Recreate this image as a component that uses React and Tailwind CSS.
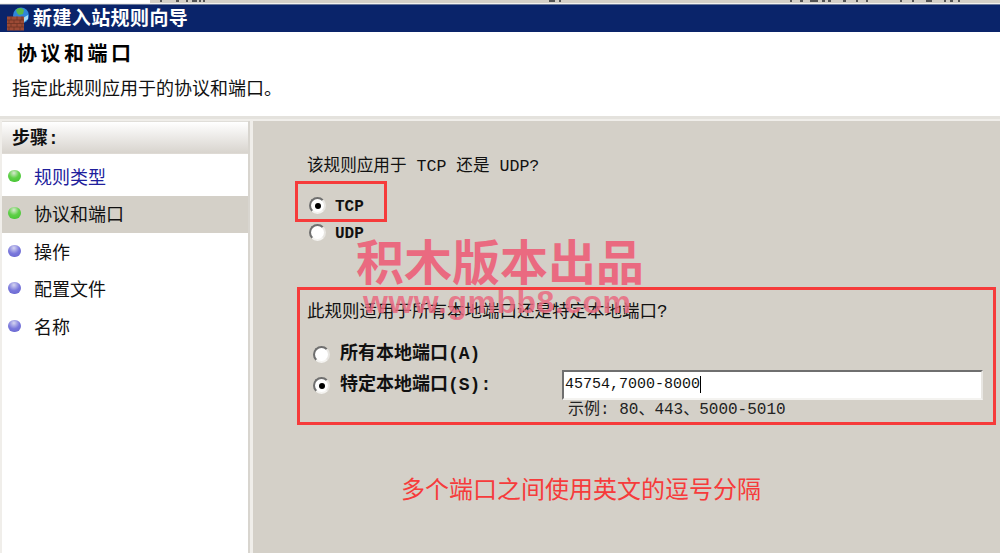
const font = "font-['Liberation_Mono','Noto_Sans_CJK_SC',monospace]";

const steps = [
  { label: '规则类型', done: true, link: true },
  { label: '协议和端口', done: true, active: true },
  { label: '操作' },
  { label: '配置文件' },
  { label: '名称' },
];

function Bullet({ done }) {
  return (
    <span
      className={`w-[13px] h-[12px] -mt-[2px] rounded-full shrink-0 ${
        done
          ? 'bg-[radial-gradient(circle_at_45%_25%,#d8e8d0_0%,#5fd048_45%,#3cc02c_100%)]'
          : 'bg-[radial-gradient(circle_at_45%_25%,#d5d5f0_0%,#7a78dc_50%,#6462cc_100%)]'
      }`}
    />
  );
}

function Radio({ checked }) {
  return (
    <span className="w-[17px] h-[17px] rounded-full bg-white border-2 border-t-[#6f6f6f] border-l-[#6f6f6f] border-r-[#e8e6e2] border-b-[#f4f3f0] flex items-center justify-center shrink-0">
      {checked && <span className="w-[6px] h-[6px] rounded-full bg-black" />}
    </span>
  );
}

function FirewallIcon() {
  return (
    <svg width="24" height="24" viewBox="0 0 24 24" className="shrink-0">
      <circle cx="15" cy="8.5" r="8" fill="#2f86d8" />
      <path d="M10 3c3-3 6-2 8 0l-1 4-4 1-2-2z" fill="#58b848" />
      <path d="M17 11l5-3 0 4-4 3z" fill="#a8dcf4" />
      <rect x="1" y="9.5" width="17" height="14" fill="#9c4a35" />
      <path d="M1 13h17M1 16.5h17M1 20h17M5 9.5v3.5M11 9.5v3.5M16 9.5v3.5M3 13v3.5M8 13v3.5M14 13v3.5M5 16.5v3.5M11 16.5v3.5M16 16.5v3.5M3 20v3.5M8 20v3.5M14 20v3.5" stroke="#6d3324" strokeWidth="0.8" fill="none" />
    </svg>
  );
}

// bottoms of the window behind, cut off by the screenshot's top edge
function TopStrip() {
  return (
    <svg width="1000" height="5" className="block shrink-0">
      <rect x="150" width="850" height="3" fill="#d4d0c8" />
      <rect y="3" width="1000" height="1" fill="#f4f2ee" />
      <rect y="4" width="1000" height="1" fill="#6b7a9c" />
      <path d="M160 0h2v2h-2zM176 0h3v2h-3zM186 0h2v2h-2zM192 0h5v2h-5zM199 0h2v2h-2zM203 0h2v2h-2zM549 0h6v2h-6zM559 0h2v2h-2zM790 0h2v2h-2zM800 0h3v2h-3zM810 0h8v2h-8zM822 0h3v2h-3zM828 0h3v2h-3zM843 0h3v2h-3zM856 0h2v2h-2zM866 0h2v2h-2zM900 0h2v2h-2zM912 0h2v2h-2zM926 0h6v2h-6zM944 0h2v2h-2zM950 0h3v2h-3zM958 0h2v2h-2z" fill="#555" />
    </svg>
  );
}

export default function App() {
  return (
    <div className={`relative w-[1000px] h-[553px] overflow-hidden bg-white text-[#111] flex flex-col ${font}`}>
      <TopStrip />

      <div className="h-[27px] shrink-0 bg-[#0a246a] flex items-center pl-[6px] gap-[3px] text-white">
        <FirewallIcon />
        <span className="text-[19px] font-bold leading-none tracking-[0.4px] pt-[3px]">新建入站规则向导</span>
      </div>

      <div className="h-[84px] shrink-0 bg-white pl-[12px] pt-[11px]">
        <div className="pl-[5px] text-[20px] font-bold leading-[26px] tracking-[3.5px] text-black">协议和端口</div>
        <div className="mt-[9px] text-[18px] leading-[24px]">指定此规则应用于的协议和端口。</div>
      </div>

      <div className="flex-1 flex min-h-0 border-t-[3px] border-[#e4e2dd] pt-[2px] bg-[#f0eeea]">
        <div className="w-[248px] ml-[2px] shrink-0 bg-white border-r-[2px] border-[#d8d5cf] flex flex-col">
          <div className="h-[33px] shrink-0 pl-[10px] pt-[3px] flex items-center text-[18px] font-bold bg-gradient-to-b from-white to-[#d8d4ce] border-t border-[#e0ded9] border-b border-b-[#dedad4]">
            步骤:
          </div>
          <div className="pt-[4px] flex flex-col">
            {steps.map((s) => (
              <div
                key={s.label}
                className={`h-[37.5px] flex items-center pl-[6px] gap-[13px] text-[18px] ${s.active ? 'bg-[#d4d0c8]' : ''} ${s.link ? 'text-[#20209c]' : ''}`}
              >
                <Bullet done={s.done} />
                <span className="pt-[5px]">{s.label}</span>
              </div>
            ))}
          </div>
        </div>

        <div className="flex-1 ml-[3px] bg-[#d4d0c8] pl-[54px] pt-[34px] min-w-0">
          <div className="text-[16.6px] leading-[24px]">该规则应用于 TCP 还是 UDP?</div>
          <div className="mt-[18px] flex flex-col gap-[10px] pl-[2px]">
            <label className="flex items-center gap-[9px] h-[17px] text-[16px] font-bold"><Radio checked /> <span className="pt-[3px]">TCP</span></label>
            <label className="flex items-center gap-[9px] h-[17px] text-[16px] font-bold"><Radio /> <span className="pt-[3px]">UDP</span></label>
          </div>

          <div className="mt-[59px] text-[17.5px] leading-[24px]">此规则适用于所有本地端口还是特定本地端口?</div>
          <div className="mt-[22px] pl-[6px] flex flex-col gap-[14px]">
            <label className="flex items-center gap-[10px] h-[17px] text-[18px] font-bold"><Radio /> 所有本地端口(A)</label>
            <div className="flex items-center h-[17px]">
              <label className="flex items-center gap-[10px] w-[249px] text-[18px] font-bold shrink-0"><Radio checked /> 特定本地端口(S):</label>
              <div className="w-[421px] h-[30px] -mt-[2px] shrink-0 bg-white border-2 border-t-[#6f6f6f] border-l-[#6f6f6f] border-r-[#e8e6e2] border-b-[#f4f3f0] flex items-center text-[15px] pl-[1px]">
                <span className="pt-[2px]">45754,7000-8000</span><span className="w-px h-[17px] bg-black" />
              </div>
            </div>
          </div>
          <div className="ml-[261px] mt-[6px] text-[16px] leading-[20px] text-[#222]">示例: 80、443、5000-5010</div>
          <div className="mt-[52px] ml-[94px] text-[24px] leading-[32px] text-[#f63b3b] font-['Noto_Sans_CJK_SC',sans-serif]">多个端口之间使用英文的逗号分隔</div>
        </div>
      </div>

      {/* red highlight boxes and watermark lie over the dialog */}
      <div className="absolute left-[295px] top-[181px] w-[92px] h-[41px] border-[3px] border-[#f63b3b]" />
      <div className="absolute left-[297px] top-[287px] w-[699px] h-[138px] border-[3px] border-[#f63b3b]" />
      <div className="absolute left-[356px] top-[231px] text-[48px] font-bold leading-[56px] text-[#ea6a80] font-['Noto_Sans_CJK_SC',sans-serif]">积木版本出品</div>
      <div className="absolute left-[363px] top-[283px] text-[32px] font-bold leading-[38px] tracking-[0.5px] text-[#ea6a80]/85 font-['Liberation_Sans',sans-serif]">www.gmbb8.com</div>
    </div>
  );
}
